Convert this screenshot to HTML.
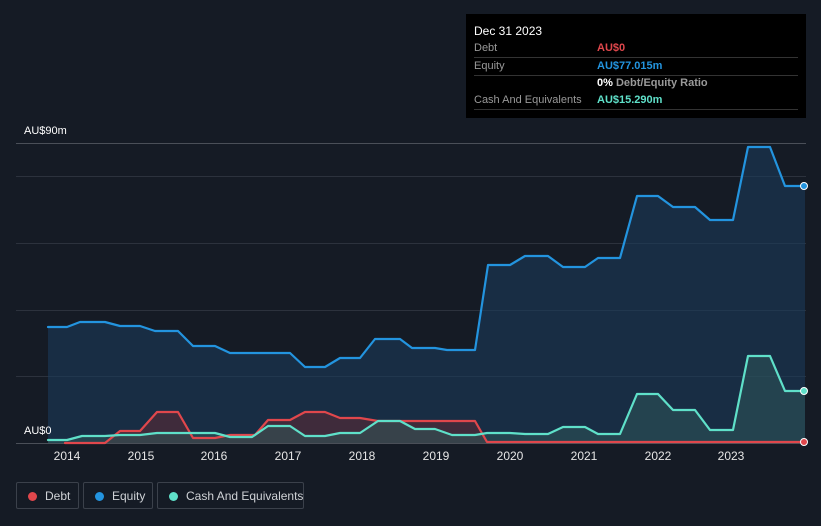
<!DOCTYPE html>
<html style="width:821px;height:526px;overflow:hidden"><head><style>
body{margin:0;width:821px;height:526px;background:#151b25;font-family:"Liberation Sans",sans-serif;overflow:hidden;position:relative}
.tt{position:absolute;left:466px;top:14px;width:340px;height:104px;background:#000;color:#fff;font-size:11px}
.row{position:absolute;left:8px;right:8px;height:17px;border-bottom:1px solid #333;line-height:17px}
.row span{position:absolute;left:123px;font-weight:bold}
.lg{position:absolute;top:482px;height:27px;border:1px solid #3b414b;border-radius:2px;color:#cfd2d6;font-size:12px;line-height:27px;box-sizing:border-box;white-space:nowrap}
.lg i{position:absolute;left:11px;top:9px;width:9px;height:9px;border-radius:50%}
.yl{position:absolute;top:449px;color:#e6e6e6;font-size:12px;width:40px;text-align:center}
</style></head><body>
<svg width="821" height="526" style="position:absolute;left:0;top:0">
<g stroke="#2c323d" stroke-width="1">
<line x1="16" y1="143.5" x2="806" y2="143.5" stroke="#4a4f58"/>
<line x1="16" y1="176.5" x2="806" y2="176.5"/>
<line x1="16" y1="243.5" x2="806" y2="243.5"/>
<line x1="16" y1="310.5" x2="806" y2="310.5"/>
<line x1="16" y1="376.5" x2="806" y2="376.5"/>
<line x1="16" y1="443.5" x2="806" y2="443.5" stroke="#4a4f58"/>
</g>
<path d="M48 327L67 327L80 322L105 322L120 326L140 326L155 331L178 331L193 346L215 346L230 353L290 353L305 367L325 367L340 358L360 358L375 339L400 339L412 348L435 348L447 350L475 350L488 265L510 265L525 256L548 256L563 267L585 267L598 258L620 258L637 196L658 196L673 207L695 207L710 220L733 220L748 147L770 147L785 186L805 186L805 443L48 443Z" fill="#1a3a5a" fill-opacity="0.6"/>
<path d="M48 443L105 443L120 431L140 431L157 412L178 412L193 438L215 438L230 435L255 435L268 420L290 420L305 412L325 412L340 418L360 418L378 421L475 421L487 443Z" fill="#5a2a35" fill-opacity="0.6"/>
<path d="M48 440L67 440L82 436L105 436L120 435L140 435L157 433L215 433L230 437L252 437L268 426L290 426L305 436L325 436L340 433L360 433L378 421L400 421L415 429L435 429L452 435L475 435L487 433L510 433L525 434L548 434L563 427L585 427L598 434L620 434L637 394L658 394L673 410L695 410L710 430L733 430L748 356L770 356L785 391L805 391L805 443L48 443Z" fill="#2f5a5a" fill-opacity="0.5"/>
<g fill="none" stroke-width="2.2" stroke-linejoin="round" stroke-linecap="round">
<path d="M48 327L67 327L80 322L105 322L120 326L140 326L155 331L178 331L193 346L215 346L230 353L290 353L305 367L325 367L340 358L360 358L375 339L400 339L412 348L435 348L447 350L475 350L488 265L510 265L525 256L548 256L563 267L585 267L598 258L620 258L637 196L658 196L673 207L695 207L710 220L733 220L748 147L770 147L785 186L805 186" stroke="#2394df"/>
<path d="M65 443L105 443L120 431L140 431L157 412L178 412L193 438L215 438L230 435L255 435L268 420L290 420L305 412L325 412L340 418L360 418L378 421L475 421L487 442L805 442" stroke="#e0474c"/>
<path d="M48 440L67 440L82 436L105 436L120 435L140 435L157 433L215 433L230 437L252 437L268 426L290 426L305 436L325 436L340 433L360 433L378 421L400 421L415 429L435 429L452 435L475 435L487 433L510 433L525 434L548 434L563 427L585 427L598 434L620 434L637 394L658 394L673 410L695 410L710 430L733 430L748 356L770 356L785 391L805 391" stroke="#5fe0c9"/>
</g>
<circle cx="804" cy="186" r="3.5" fill="#2394df" stroke="#fff" stroke-width="1"/>
<circle cx="804" cy="391" r="3.5" fill="#5fe0c9" stroke="#fff" stroke-width="1"/>
<circle cx="804" cy="442" r="3.5" fill="#e0474c" stroke="#fff" stroke-width="1"/>
</svg>
<div style="position:absolute;left:24px;top:125px;color:#fff;font-size:11px">AU$90m</div>
<div style="position:absolute;left:24px;top:425px;color:#fff;font-size:11px">AU$0</div>
<div class="yl" style="left:47px">2014</div><div class="yl" style="left:121px">2015</div><div class="yl" style="left:194px">2016</div><div class="yl" style="left:268px">2017</div><div class="yl" style="left:342px">2018</div><div class="yl" style="left:416px">2019</div><div class="yl" style="left:490px">2020</div><div class="yl" style="left:564px">2021</div><div class="yl" style="left:638px">2022</div><div class="yl" style="left:711px">2023</div>
<div class="tt">
<div style="position:absolute;left:8px;top:10px;font-size:12px">Dec 31 2023</div>
<div class="row" style="top:26px;color:#999">Debt<span style="color:#e0474c">AU$0</span></div>
<div class="row" style="top:44px;color:#999">Equity<span style="color:#2394df">AU$77.015m</span></div>
<div class="row" style="top:61px;color:#999;border:none"><span style="color:#fff">0% <b style="color:#999">Debt/Equity Ratio</b></span></div>
<div class="row" style="top:78px;color:#999">Cash And Equivalents<span style="color:#5fe0c9">AU$15.290m</span></div>
</div>
<div class="lg" style="left:16px;width:63px"><i style="background:#e0474c"></i><span style="position:absolute;left:28px">Debt</span></div>
<div class="lg" style="left:83px;width:70px"><i style="background:#2394df"></i><span style="position:absolute;left:28px">Equity</span></div>
<div class="lg" style="left:157px;width:147px"><i style="background:#5fe0c9"></i><span style="position:absolute;left:28px">Cash And Equivalents</span></div>
</body></html>
